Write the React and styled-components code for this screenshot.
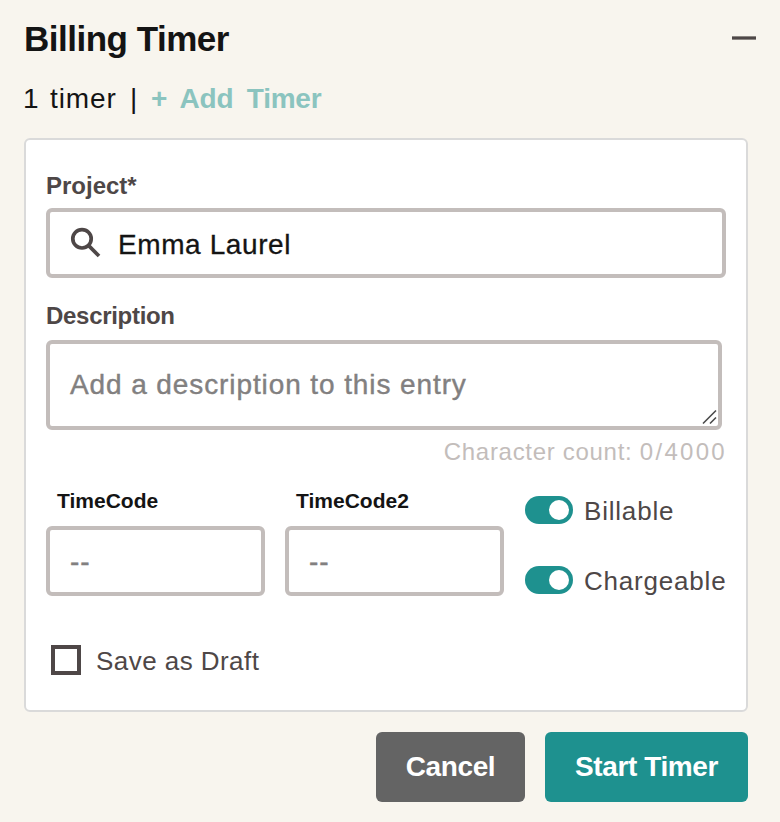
import { useState } from "react";
import styled, { createGlobalStyle } from "styled-components";

const timeCodes = ["TimeCode", "TimeCode2"];

const App = () => {
  const [billable, setBillable] = useState(true);
  const [chargeable, setChargeable] = useState(true);
  const [draft, setDraft] = useState(false);

  return (
    <Container>
      <GlobalStyle />
      <Header>
        <Title>Billing Timer</Title>
        <MinimizeBtn aria-label="Minimize" />
      </Header>

      <TimerBar>
        <TimerCount>1 timer</TimerCount>
        <Divider>|</Divider>
        <AddTimer>+ Add Timer</AddTimer>
      </TimerBar>

      <Card>
        <Label>Project*</Label>
        <Field>
          <SearchIcon viewBox="0 0 40 40">
            <circle cx="16" cy="15.8" r="9.2" />
            <path d="M22.4 22.4L33 33" />
          </SearchIcon>
          <Value>Emma Laurel</Value>
        </Field>

        <Label $tracking="-0.3px">Description</Label>
        <TextArea>
          <Placeholder>Add a description to this entry</Placeholder>
          <ResizeHandle viewBox="0 0 16 16">
            <path d="M2 14.5L15 1.5M9 14.5L15 8.5" />
          </ResizeHandle>
        </TextArea>
        <CharCount>
          Character count: <span>0/4000</span>
        </CharCount>

        <Options>
          {timeCodes.map((name) => (
            <TimeCode key={name}>
              <TimeLabel>{name}</TimeLabel>
              <Field>
                <Placeholder>--</Placeholder>
              </Field>
            </TimeCode>
          ))}
          <Toggles>
            <Toggle onClick={() => setBillable(!billable)}>
              <Track $on={billable}>
                <Knob />
              </Track>
              <OptionText>Billable</OptionText>
            </Toggle>
            <Toggle onClick={() => setChargeable(!chargeable)}>
              <Track $on={chargeable}>
                <Knob />
              </Track>
              <OptionText>Chargeable</OptionText>
            </Toggle>
          </Toggles>
        </Options>

        <Draft onClick={() => setDraft(!draft)}>
          <Checkbox $checked={draft} />
          <OptionText $tracking="0.45px">Save as Draft</OptionText>
        </Draft>
      </Card>

      <Footer>
        <Button $width="149px">Cancel</Button>
        <Button $width="203px" $primary>
          Start Timer
        </Button>
      </Footer>
    </Container>
  );
};

const GlobalStyle = createGlobalStyle`
  * {
    box-sizing: border-box;
  }

  body {
    margin: 0;
    background: #f8f5ee;
    font-family: "Liberation Sans", Arial, Helvetica, sans-serif;
  }
`;

const Container = styled.div`
  width: 780px;
  height: 822px;
  padding: 18px 32px 20px 24px;
  background: #f8f5ee;
  color: #141414;
`;

const Header = styled.div`
  display: flex;
  justify-content: space-between;
  align-items: center;
  height: 40px;
  margin-right: -8px;
`;

const Title = styled.h1`
  margin: 2px 0 0;
  font-size: 35px;
  line-height: 40px;
  letter-spacing: -0.5px;
`;

const MinimizeBtn = styled.button`
  width: 24px;
  height: 4px;
  padding: 0;
  border: 1px solid #8b8682;
  border-width: 1px 0;
  background: #4e4747;
  cursor: pointer;
`;

const TimerBar = styled.div`
  display: flex;
  height: 80px;
  padding-top: 25px;
  font-size: 28px;
  line-height: 32px;
`;

const TimerCount = styled.span`
  width: 107px;
  margin-left: -1px;
  letter-spacing: 0.9px;
  word-spacing: 1.8px;
  white-space: nowrap;
`;

const Divider = styled.span`
  width: 21px;
`;

const AddTimer = styled.a`
  color: #8bc4bf;
  font-weight: bold;
  word-spacing: 6px;
  letter-spacing: -0.25px;
  cursor: pointer;
`;

const Card = styled.div`
  height: 574px;
  padding: 32px 20px 0;
  border: 2px solid #dadada;
  border-radius: 6px;
  background: #fff;
`;

const Label = styled.div`
  height: 36px;
  color: #4e4747;
  font-size: 24px;
  font-weight: bold;
  line-height: 28px;
  letter-spacing: ${(props) => props.$tracking || "0"};
`;

const Field = styled.div`
  display: flex;
  align-items: center;
  height: 70px;
  padding: 0 16px;
  border: 4px solid #c3bdbb;
  border-radius: 6px;
  background: #fff;

  & + ${Label} {
    height: 38px;
    margin-top: 24px;
  }
`;

const SearchIcon = styled.svg`
  width: 40px;
  height: 40px;
  fill: none;
  stroke: #4e4747;
  stroke-width: 3.7;
`;

const Value = styled.span`
  margin: 3px 0 0 12px;
  font-size: 28px;
  line-height: 32px;
  letter-spacing: 0.6px;
  -webkit-text-stroke: 0.3px currentColor;
`;

const TextArea = styled.div`
  position: relative;
  display: flex;
  align-items: center;
  width: 676px;
  height: 90px;
  padding: 0 20px;
  border: 4px solid #c3bdbb;
  border-radius: 6px;
`;

const Placeholder = styled.span`
  color: #828080;
  font-size: 28px;
  line-height: 32px;
  letter-spacing: 0.9px;
  -webkit-text-stroke: 0.4px currentColor;
`;

const ResizeHandle = styled.svg`
  position: absolute;
  right: 1px;
  bottom: 1px;
  width: 16px;
  height: 16px;
  fill: none;
  stroke: #4b4b4b;
  stroke-width: 1.6;
`;

const CharCount = styled.div`
  height: 28px;
  margin-top: 8px;
  margin-right: -1px;
  color: #c3bdbb;
  font-size: 24px;
  line-height: 28px;
  letter-spacing: 0.7px;
  text-align: right;

  span {
    letter-spacing: 2.3px;
  }
`;

const Options = styled.div`
  display: grid;
  grid-template-columns: 219px 219px 1fr;
  column-gap: 20px;
  margin-top: 22px;
`;

const TimeCode = styled.div`
  ${Field} {
    padding: 2px 20px 0;
  }
`;

const TimeLabel = styled.div`
  height: 38px;
  padding-left: 11px;
  font-size: 21px;
  font-weight: bold;
  line-height: 26px;
`;

const Toggles = styled.div`
  display: flex;
  flex-direction: column;
  gap: 40px;
  padding: 7px 0 0 1px;
`;

const Toggle = styled.div`
  display: flex;
  align-items: center;
  gap: 11px;
  height: 30px;
  cursor: pointer;
`;

const Track = styled.div`
  display: flex;
  flex: none;
  align-items: center;
  justify-content: ${(props) => (props.$on ? "flex-end" : "flex-start")};
  width: 48px;
  height: 28px;
  padding: 4px;
  border-radius: 14px;
  background: ${(props) => (props.$on ? "#1e918f" : "#c3bdbb")};
`;

const Knob = styled.div`
  width: 20px;
  height: 20px;
  border-radius: 50%;
  background: #fff;
`;

const OptionText = styled.span`
  margin-top: 2px;
  color: #4e4747;
  font-size: 26px;
  line-height: 30px;
  letter-spacing: ${(props) => props.$tracking || "0.8px"};
  white-space: nowrap;
`;

const Draft = styled.div`
  display: flex;
  align-items: center;
  gap: 15px;
  height: 30px;
  margin: 49px 0 0 5px;
  cursor: pointer;
`;

const Checkbox = styled.div`
  width: 30px;
  height: 30px;
  border: 4px solid #4e4747;
  background: ${(props) => (props.$checked ? "#4e4747" : "#fff")};
`;

const Footer = styled.div`
  display: flex;
  justify-content: flex-end;
  gap: 20px;
  margin-top: 20px;
`;

const Button = styled.button`
  width: ${(props) => props.$width};
  height: 70px;
  padding: 0;
  border: none;
  border-radius: 6px;
  background: ${(props) => (props.$primary ? "#1e918f" : "#646464")};
  color: #fff;
  font-family: inherit;
  font-size: 28px;
  font-weight: bold;
  letter-spacing: -0.4px;
  cursor: pointer;
`;

export default App;
